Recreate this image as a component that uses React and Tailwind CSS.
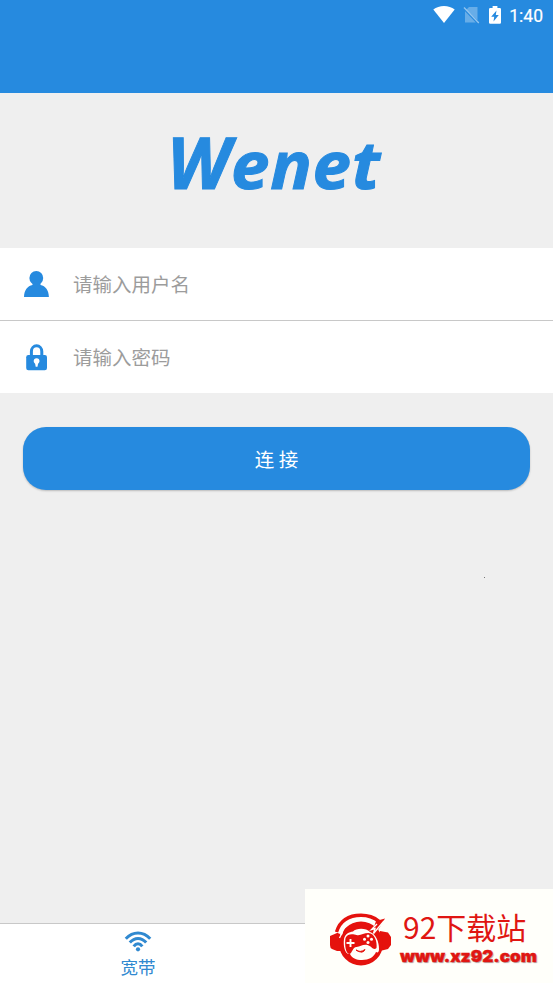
const cjk = "font-['Noto_Sans_CJK_SC',sans-serif]";

function StatusBar() {
  return (
    <div className="flex h-8 items-start justify-end pr-[10px] text-white">
      <svg className="mt-[6px] h-[17px] w-[22px]" viewBox="0 0 22 17" fill="currentColor">
        <path d="M11 17 0.3 3.6C3.2 1.3 7 .1 11 .1s7.800 1.200 10.700 3.500Z" />
      </svg>
      <svg className="mt-[6px] ml-[8px] h-[18px] w-[17px]" viewBox="0 0 17 18" fill="none">
        <path d="M6 1H14.500V14.200L3.500 3.500ZM2 5.200 12.800 16.500H2Z" fill="#fff" opacity=".3" />
        <path d="M1 1.500 15.800 17" stroke="#fff" strokeWidth="1.300" opacity=".5" />
      </svg>
      <svg className="mt-[6px] ml-[9px] h-[18px] w-[12px]" viewBox="0 0 12 18">
        <path d="M3.600 0H8.400V2H10.800Q12 2 12 3.200V16.600Q12 17.800 10.800 17.800H1.200Q0 17.800 0 16.600V3.200Q0 2 1.200 2H3.600Z" fill="currentColor" />
        <path d="M7.500 4.500 2.200 10.800H5.200L4.500 15.500 9.800 9H6.800Z" fill="#268adf" />
      </svg>
      <span className="mt-[5px] ml-[8px] font-[Roboto,sans-serif] text-[17.500px] leading-[22px] font-normal [-webkit-text-stroke:0.200px_#fff]">1:40</span>
    </div>
  );
}

function UserIcon() {
  return (
    <svg className="h-[27px] w-[26px]" viewBox="0 0 26 27" fill="#268adf">
      <ellipse cx="12.300" cy="7" rx="6.900" ry="7" />
      <path d="M8.500 11H16.500V14C21.500 15 24.700 19 24.900 26H0C.2 19 3.500 15 8.500 14Z" />
    </svg>
  );
}

function LockIcon() {
  return (
    <svg className="h-[27px] w-[26px]" viewBox="0 0 26 27">
      <path d="M7.400 13V7.500a5.200 5.700 0 0 1 10.400 0V13" fill="none" stroke="#268adf" strokeWidth="3" />
      <rect x="2.200" y="11" width="20.800" height="15.200" rx="2.200" fill="#268adf" />
      <path d="M12.600 14.200a2.900 2.900 0 0 1 2.900 2.900c0 1.400-1 2-1.500 3l-.5 2.700h-1.800l-.5-2.700c-.5-1-1.500-1.600-1.500-3a2.900 2.900 0 0 1 2.900-2.900Z" fill="#fff" />
    </svg>
  );
}

function WifiIcon() {
  return (
    <svg className="h-[21px] w-[28px]" viewBox="0 0 28 21" fill="none" stroke="#3089d0" strokeWidth="3">
      <path d="M1.800 7.800Q7.200 2 14 2T26.200 7.800" />
      <path d="M5.800 11.600Q9.400 7.400 14 7.400T22.200 11.600" />
      <path d="M9.700 15.400Q11.600 12.800 14 12.800T18.300 15.400" />
      <circle cx="14" cy="18.300" r="2.100" fill="#3089d0" stroke="none" />
    </svg>
  );
}

function PandaLogo() {
  return (
    <svg className="h-[54px] w-[62px]" viewBox="0 0 62 54">
      <g fill="#e5120d">
        <path d="M0 23 7 20H12V38H7L2 36Q0 35 0 32Z" />
        <path d="M50 18 58 19.500 61 24V32L58 36 50 38Z" />
        <circle cx="31" cy="30.500" r="22" />
      </g>
      <path d="M11 22C14 11 21 6.200 31 6.200c6 0 10 1.300 15 4" fill="none" stroke="#fffffa" strokeWidth="2" />
      <path d="M6.500 19C10 8 19 2.300 31 2.300c7 0 13 2 18 6" fill="none" stroke="#e5120d" strokeWidth="3.400" />
      <path d="M12 16 9.500 20h2.500L9.500 25" fill="none" stroke="#fffffa" strokeWidth="1.300" />
      <path d="M46 8 55 5.500 48 17 43 17Z" fill="#e5120d" />
      <path d="M54 8 43.500 20.500 45 15.500 41.500 16.500 47 11" fill="none" stroke="#fffffa" strokeWidth="1.400" />
      <path d="M23 18.500C26 15 36 14.500 40 19c6 2 9 10 9 17 0 3-1 4-3 3-2 5-7 8-14 8-6 0-10-2-12-6-5 1-7-8-6-15 1-5 5-7 9-7.500Z" fill="#fffffa" />
      <path d="M15.500 25c2-5 8-4 11-3 4 1 7-2 12-2 6 0 9 9 8 15-3 3-5-2-9-3-5-1-7 2-11 2s-4 6-7 7c-4 0-5-10-4-16Z" fill="#e5120d" />
      <path d="M20.500 26v8M16.500 30h8" stroke="#fffffa" strokeWidth="1.900" />
      <g fill="#fffffa"><circle cx="38" cy="23" r="1.500" /><circle cx="34.500" cy="26.200" r="1.500" /><circle cx="41.500" cy="26.200" r="1.500" /><circle cx="38" cy="29.400" r="1.500" /></g>
      <path d="M26 37q4 3 9-.5-2 5-9 .5Z" fill="#e5120d" stroke="#e5120d" />
    </svg>
  );
}

function Field({ icon, label }) {
  return (
    <label className="flex h-[72px] items-center bg-white pl-[24px]">
      {icon}
      <input
        placeholder={label}
        className={`${cjk} mb-[2px] ml-[23px] h-10 flex-1 bg-transparent text-[19.500px] outline-none placeholder:text-[#9c9c9c]`}
      />
    </label>
  );
}

export default function App() {
  return (
    <div className="relative flex h-[983px] w-[553px] flex-col overflow-hidden bg-[#efefef]">
      <header className="h-[93px] shrink-0 bg-[#268adf]">
        <StatusBar />
      </header>
      <h1 className="flex h-[155px] shrink-0 items-baseline pt-[18px] pl-[167px] font-['Open_Sans',sans-serif] leading-[100px] font-bold text-[#268adf] italic [-webkit-text-stroke:1px_#268adf]">
        <span className="inline-block w-[64px] origin-left scale-x-[0.980] text-[72px]">W</span>
        <span className="inline-block origin-left scale-x-[1.030] text-[67px] tracking-[0.700px]">enet</span>
      </h1>
      <form className="shrink-0">
        <Field icon={<UserIcon />} label="请输入用户名" />
        <div className="h-px bg-[#c8c8c8]" />
        <Field icon={<LockIcon />} label="请输入密码" />
        <div className="px-[23px] pt-[34px]">
          <button type="button" className={`${cjk} h-[63px] w-full rounded-[23px] bg-[#268adf] text-[19.500px] text-white shadow-[0_1px_2px_rgba(0,0,0,0.22)]`}>
            连 接
          </button>
        </div>
      </form>
      <div className="mt-[87px] ml-[484px] size-px shrink-0 bg-[#777]" />
      <nav className="mt-auto flex h-[60px] border-t border-[#c8c8c8] bg-white">
        <div className="flex w-[276px] flex-col items-center pt-[7px]">
          <WifiIcon />
          <span className={`${cjk} mt-[3px] text-[17.500px] leading-[24px] text-[#3089d0]`}>宽带</span>
        </div>
      </nav>
      <aside className="absolute right-0 bottom-0 flex h-[94px] w-[248px] bg-[#fffffa] pt-[24px] pl-[25px] text-[#e01612]">
        <PandaLogo />
        <div className="ml-[8px] flex flex-col items-start">
          <span className={`${cjk} ml-[3px] -mt-[3px] text-[30px] leading-[32px] whitespace-nowrap`}>92下载站</span>
          <span className="mt-[5px] origin-left scale-x-[1.070] font-[Inter,'Liberation_Sans',sans-serif] text-[16px] leading-[18px] font-black whitespace-nowrap [-webkit-text-stroke:0.400px_#e01612] [text-shadow:1px_1px_1px_#aaa]">www.xz92.com</span>
        </div>
      </aside>
    </div>
  );
}
